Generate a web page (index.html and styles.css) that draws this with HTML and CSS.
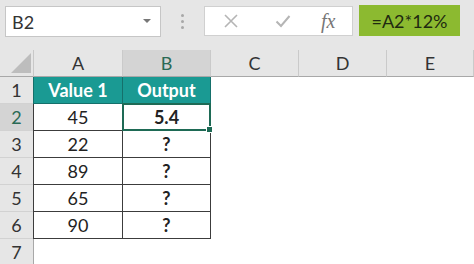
FILE: index.html
```html
<!DOCTYPE html>
<html lang="en">
  <head>
    <meta charset="UTF-8" />
    <title>Sheet</title>
    <link rel="stylesheet" href="styles.css">
  </head>
  <body>
    <!-- Barre de formule -->
    <div class="toolbar">
      <div class="namebox">
        <span>B2</span>
        <svg class="arrow" width="8" height="5" viewBox="0 0 8 5"><path d="M0 0h8L4 4z" fill="#777"/></svg>
      </div>
      <div class="dots"><i></i><i></i><i></i></div>
      <div class="fbox">
        <svg width="16" height="16" viewBox="0 0 16 16"><path d="M2 2l12 12M14 2L2 14" stroke="#b5b5b5" stroke-width="1.6"/></svg>
        <svg width="16" height="14" viewBox="0 0 16 14"><path d="M1.5 7.5l4.5 4.5L14.5 2" fill="none" stroke="#b5b5b5" stroke-width="2"/></svg>
        <span class="fx">fx</span>
      </div>
      <div class="formula">=A2*12%</div>
    </div>

    <!-- Feuille -->
    <div class="sheet">
      <div class="corner"><svg width="20" height="20" viewBox="0 0 20 20"><path d="M20 0v20H0z" fill="#bdbdbd"/></svg></div>
      <div class="colh">A</div>
      <div class="colh sel">B</div>
      <div class="colh">C</div>
      <div class="colh">D</div>
      <div class="colh">E</div>

      <div class="rowh">1</div>
      <div class="c a head">Value 1</div>
      <div class="c head">Output</div>
      <div></div><div></div><div></div>

      <div class="rowh sel">2</div>
      <div class="c a">45</div>
      <div class="c b active">5.4<span class="handle"></span></div>
      <div></div><div></div><div></div>

      <div class="rowh">3</div>
      <div class="c a">22</div>
      <div class="c b">?</div>
      <div></div><div></div><div></div>

      <div class="rowh">4</div>
      <div class="c a">89</div>
      <div class="c b">?</div>
      <div></div><div></div><div></div>

      <div class="rowh">5</div>
      <div class="c a">65</div>
      <div class="c b">?</div>
      <div></div><div></div><div></div>

      <div class="rowh">6</div>
      <div class="c a">90</div>
      <div class="c b">?</div>
      <div></div><div></div><div></div>

      <div class="rowh">7</div>
      <div></div><div></div><div></div><div></div><div></div>
    </div>
  </body>
</html>
```

FILE: styles.css
```css
html,
body {
  margin: 0;
  padding: 0;
  width: 474px;
  height: 264px;
  overflow: hidden;
  background-color: #fff;
  font-family: "Lato", "Open Sans", sans-serif;
  color: #222;
}

/* Barre du haut */
.toolbar {
  display: flex;
  align-items: flex-start;
  height: 50px;
  background-color: #e6e6e6;
  box-sizing: border-box;
  padding: 5px 0 0 5px;
}

.namebox {
  width: 156px;
  height: 31px;
  margin-top: 1px;
  background-color: #fff;
  border: 1px solid #c6c6c6;
  box-sizing: border-box;
  display: flex;
  align-items: center;
  justify-content: space-between;
  padding: 0 9px 0 6px;
  font-size: 18px;
  color: #333;
}

.dots {
  width: 43px;
  display: flex;
  flex-direction: column;
  align-items: center;
  gap: 3px;
  padding-top: 9px;
}

.dots i {
  width: 3px;
  height: 3px;
  background-color: #a8a8a8;
  border-radius: 50%;
}

.fbox {
  width: 149px;
  height: 30px;
  margin-top: 1px;
  background-color: #fff;
  border: 1px solid #d0d0d0;
  box-sizing: border-box;
  display: flex;
  align-items: center;
  padding-left: 18px;
  gap: 36px;
}

.fx {
  font-family: "Liberation Serif", serif;
  font-style: italic;
  font-size: 20px;
  color: #777;
  margin-left: -6px;
}

.formula {
  width: 101px;
  height: 31px;
  margin-left: 6px;
  background-color: #8cba30;
  font-size: 18px;
  color: #1f2a10;
  display: flex;
  align-items: center;
  justify-content: center;
}

/* Grille */
.sheet {
  display: grid;
  grid-template-columns: 34px 89px 88px 88px 88px 87px;
  grid-auto-rows: 27px;
  font-size: 18px;
}

.corner {
  background-color: #e6e6e6;
  border-right: 1px solid #c8c8c8;
  border-bottom: 1px solid #a8a8a8;
  box-sizing: border-box;
  display: flex;
  align-items: flex-end;
  justify-content: flex-end;
  padding: 0 2px 3px 0;
}

.colh {
  background-color: #e6e6e6;
  border-right: 1px solid #cacaca;
  border-bottom: 1px solid #a8a8a8;
  box-sizing: border-box;
  display: flex;
  align-items: center;
  justify-content: center;
  color: #333;
}

.colh.sel {
  background-color: #d4d4d4;
  color: #2a6a55;
}

.rowh {
  background-color: #e6e6e6;
  border-right: 1px solid #a8a8a8;
  border-bottom: 1px solid #d2d2d2;
  box-sizing: border-box;
  display: flex;
  align-items: center;
  justify-content: center;
  color: #333;
}

.rowh.sel {
  background-color: #d4d4d4;
  color: #2a6a55;
}

/* Cellules du tableau */
.c {
  border-right: 1px solid #3c3c3c;
  border-bottom: 1px solid #3c3c3c;
  box-sizing: border-box;
  display: flex;
  align-items: center;
  justify-content: center;
  color: #222;
}

.c.a {
  border-left: 1px solid #3c3c3c;
  margin-left: -1px;
}

.c.b {
  font-weight: bold;
}

.c.head {
  background-color: #1a9a93;
  color: #fff;
  font-weight: bold;
  border-color: #15706b;
}

.c.active {
  position: relative;
  border: 2px solid #1e6a55;
  margin: -1px 0 0 -1px;
}

.handle {
  position: absolute;
  right: -4px;
  bottom: -4px;
  width: 5px;
  height: 5px;
  background-color: #1e6a55;
  border: 1px solid #fff;
}
```
